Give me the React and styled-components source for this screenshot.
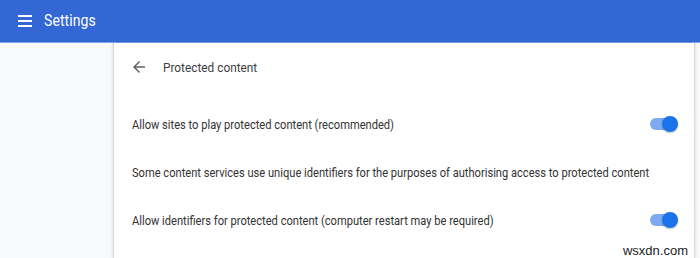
import React from "react";
import styled, { createGlobalStyle } from "styled-components";

const Global = createGlobalStyle`
  html, body { margin: 0; padding: 0; }
  body { font-family: Roboto, "Liberation Sans", Arial, sans-serif; background: #f8f9fa; width: 700px; height: 258px; overflow: hidden; }
`;

const Page = styled.div`
  width: 700px;
  height: 258px;
  display: flex;
  flex-direction: column;
  position: relative;
  overflow: hidden;
`;

const Toolbar = styled.header`
  height: 42px;
  background: #3367d6;
  border-bottom: 1px solid #7fa4ea;
  display: flex;
  align-items: center;
  padding-left: 18px;
  gap: 12px;
  flex-shrink: 0;
`;

const MenuButton = styled.div`
  width: 14px;
  height: 12px;
  display: flex;
  flex-direction: column;
  justify-content: space-between;
  span { display: block; height: 2px; background: #fff; }
`;

const Squeezed = styled.span`
  display: inline-block;
  white-space: nowrap;
  transform: scaleX(${(p) => p.$sx || 0.855});
  transform-origin: left center;
`;

const AppTitle = styled.div`
  color: #fff;
  font-size: 16.5px;
  font-weight: 400;
  letter-spacing: 0.1px;
  margin-top: -1px;
`;

const Body = styled.div`
  flex: 1;
  display: flex;
`;

const Sidebar = styled.div`
  width: 112px;
  background: #f8f9fa;
  flex-shrink: 0;
`;

const Card = styled.main`
  width: 580px;
  background: #fff;
  box-shadow: -1px 0 0 #dadce0, 1px 0 0 #dadce0, -2px 0 2px rgba(60,64,67,0.12), 2px 0 2px rgba(60,64,67,0.12);
  margin-left: 2px;
  padding: 0 18px;
  box-sizing: border-box;
  display: flex;
  flex-direction: column;
`;

const TitleRow = styled.div`
  height: 48px;
  display: flex;
  align-items: center;
  gap: 15px;
  margin-bottom: 9px;
`;

const BackIcon = styled.svg`
  width: 18px;
  height: 18px;
  margin-left: -2px;
`;

const SubTitle = styled.div`
  font-size: 13px;
  color: #3c4043;
`;

const Row = styled.div`
  height: 48px;
  display: flex;
  align-items: center;
  justify-content: space-between;
  font-size: 13px;
  color: #333;
`;

const Toggle = styled.div`
  position: relative;
  width: 28px;
  height: 16px;
  margin-right: -2px;
  &::before {
    content: "";
    position: absolute;
    left: 0;
    top: 2px;
    width: 24px;
    height: 12px;
    border-radius: 6px;
    background: #7faaf2;
  }
  &::after {
    content: "";
    position: absolute;
    right: 0;
    top: 0;
    width: 16px;
    height: 16px;
    border-radius: 50%;
    background: #1a73e8;
    box-shadow: 0 1px 2px rgba(0,0,0,0.25);
  }
`;

const Watermark = styled.div`
  position: absolute;
  right: 12px;
  bottom: 0px;
  font-size: 13px;
  line-height: 15px;
  color: #222;
  font-family: "Liberation Sans", Arial, sans-serif;
`;

export default function App() {
  return (
    <Page>
      <Global />
      <Toolbar>
        <MenuButton><span /><span /><span /></MenuButton>
        <AppTitle><Squeezed $sx={0.85}>Settings</Squeezed></AppTitle>
      </Toolbar>
      <Body>
        <Sidebar />
        <Card>
          <TitleRow>
            <BackIcon viewBox="0 0 24 24">
              <path d="M20 11H7.83l5.59-5.59L12 4l-8 8 8 8 1.41-1.41L7.83 13H20v-2z" fill="#5f6368" />
            </BackIcon>
            <SubTitle><Squeezed $sx={0.91}>Protected content</Squeezed></SubTitle>
          </TitleRow>
          <Row>
            <Squeezed>Allow sites to play protected content (recommended)</Squeezed>
            <Toggle />
          </Row>
          <Row>
            <Squeezed>Some content services use unique identifiers for the purposes of authorising access to protected content</Squeezed>
          </Row>
          <Row>
            <Squeezed>Allow identifiers for protected content (computer restart may be required)</Squeezed>
            <Toggle />
          </Row>
        </Card>
      </Body>
      <Watermark>wsxdn.com</Watermark>
    </Page>
  );
}
